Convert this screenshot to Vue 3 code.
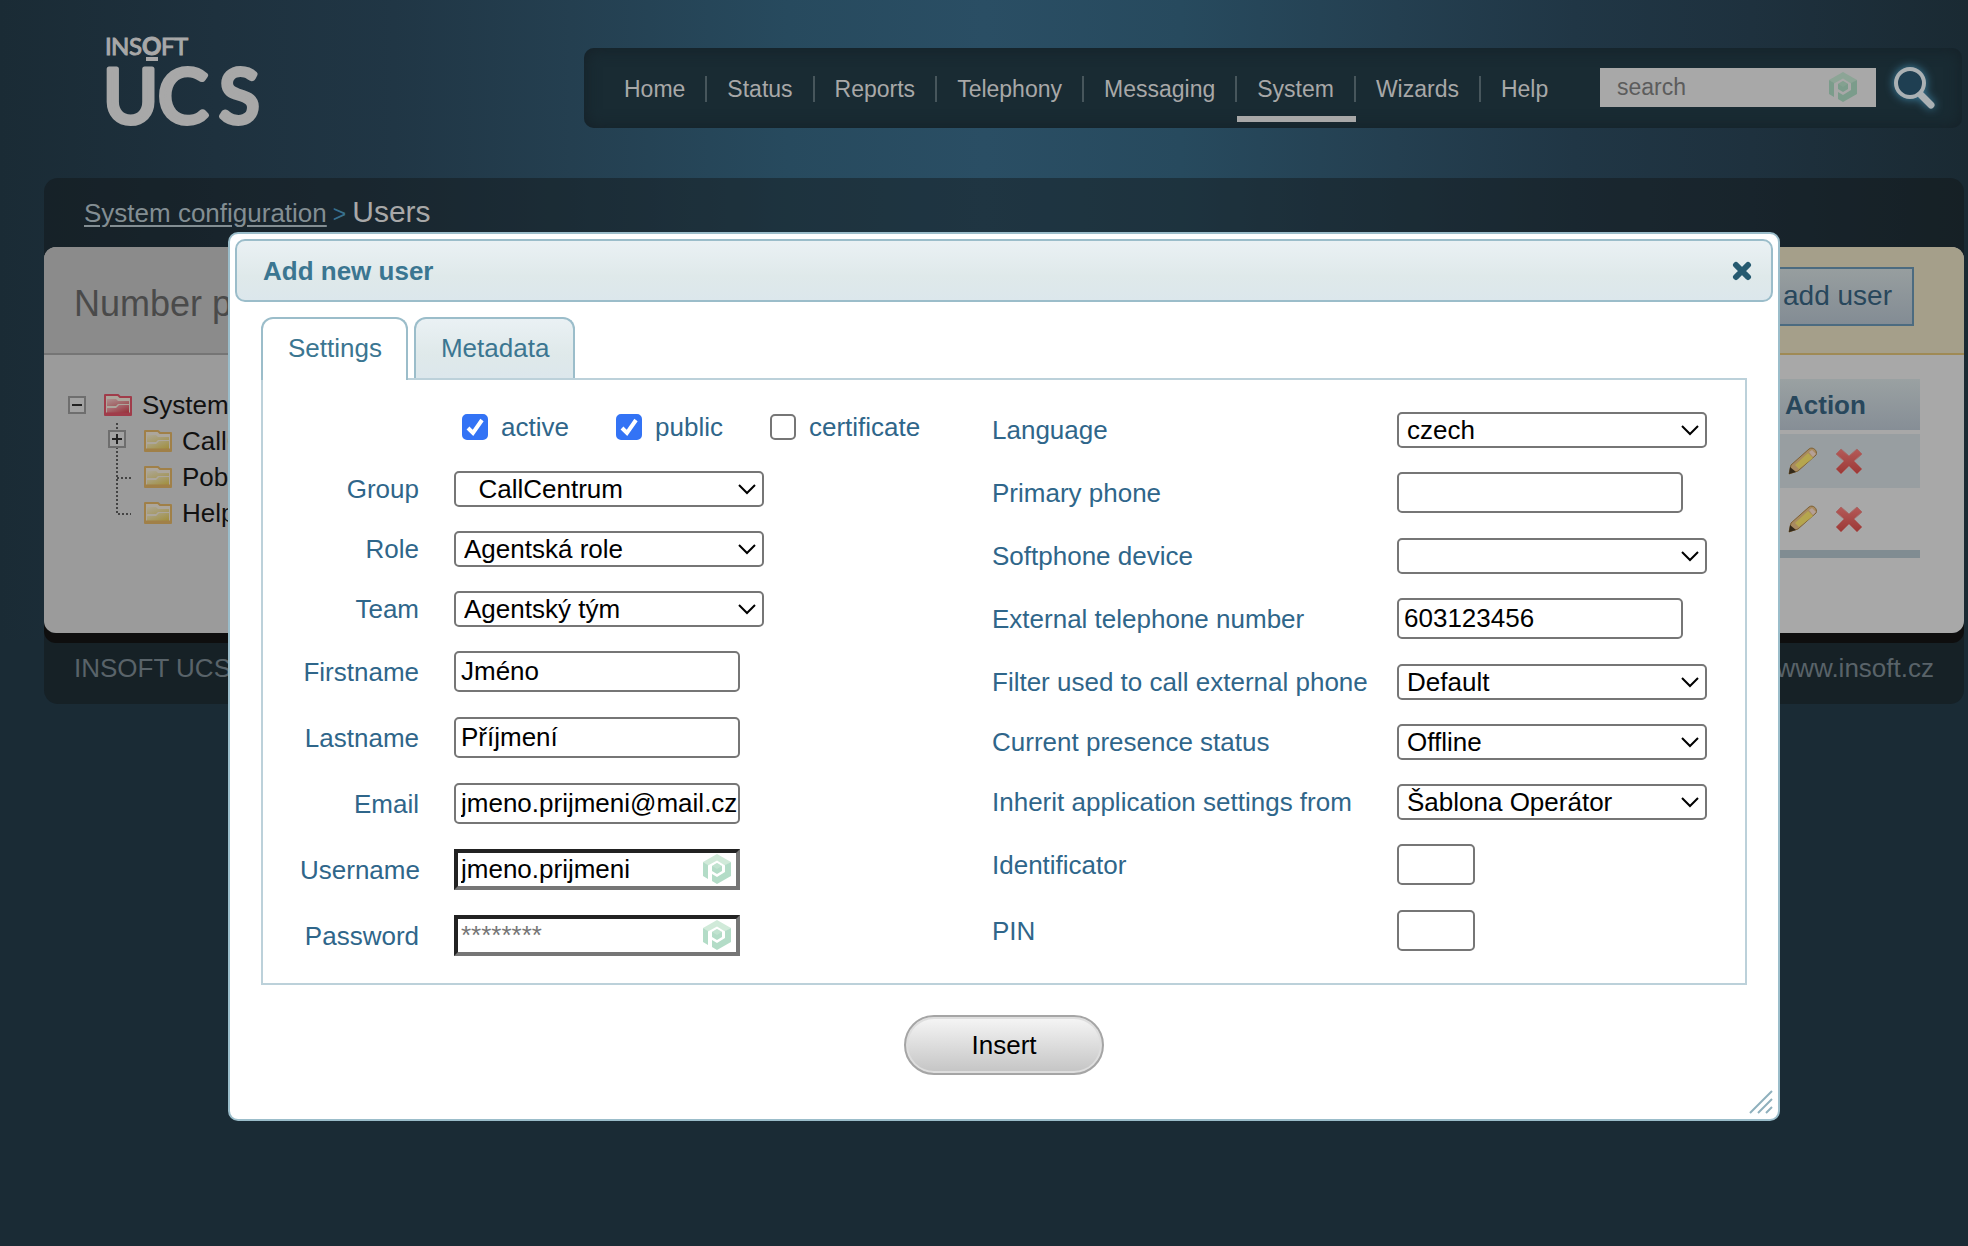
<script setup>
import { ref } from 'vue'

const nav = ['Home', 'Status', 'Reports', 'Telephony', 'Messaging', 'System', 'Wizards', 'Help']
const groups = ['CallCentrum', 'Pobočky', 'Helpdesk']

const flags = ref([
  { id: 'active', on: true },
  { id: 'public', on: true },
  { id: 'certificate', on: false },
])

const left = [
  { id: 'group', label: 'Group', kind: 'select', value: '\u00a0\u00a0CallCentrum' },
  { id: 'role', label: 'Role', kind: 'select', value: 'Agentská role' },
  { id: 'team', label: 'Team', kind: 'select', value: 'Agentský tým' },
  { id: 'firstname', label: 'Firstname', kind: 'text', value: 'Jméno' },
  { id: 'lastname', label: 'Lastname', kind: 'text', value: 'Příjmení' },
  { id: 'email', label: 'Email', kind: 'text', value: 'jmeno.prijmeni@mail.cz' },
  { id: 'username', label: 'Username', kind: 'text', value: 'jmeno.prijmeni', key: true },
  { id: 'password', label: 'Password', kind: 'password', value: '', hint: '********', key: true },
]

const right = [
  { id: 'language', label: 'Language', kind: 'select', value: 'czech' },
  { id: 'phone', label: 'Primary phone', kind: 'text', value: '' },
  { id: 'softphone', label: 'Softphone device', kind: 'select', value: '' },
  { id: 'external', label: 'External telephone number', kind: 'text', value: '603123456' },
  { id: 'filter', label: 'Filter used to call external phone', kind: 'select', value: 'Default' },
  { id: 'presence', label: 'Current presence status', kind: 'select', value: 'Offline' },
  { id: 'inherit', label: 'Inherit application settings from', kind: 'select', value: 'Šablona Operátor' },
  { id: 'ident', label: 'Identificator', kind: 'text', value: '', short: true },
  { id: 'pin', label: 'PIN', kind: 'text', value: '', short: true },
]

const columns = [
  { side: 'left', fields: left },
  { side: 'right', fields: right },
]
</script>

<template>
  <div class="page">
    <svg class="defs" width="0" height="0" aria-hidden="true">
      <defs>
        <linearGradient id="gold" x1="0" y1="0" x2="1" y2="1">
          <stop offset="0" stop-color="#aca792" />
          <stop offset="1" stop-color="#a08c34" />
        </linearGradient>
        <linearGradient id="rose" x1="0" y1="0" x2="1" y2="1">
          <stop offset="0" stop-color="#b0868a" />
          <stop offset="1" stop-color="#942630" />
        </linearGradient>
        <linearGradient id="cross" x1="0" y1="0" x2="0" y2="1">
          <stop offset="0" stop-color="#b45a58" />
          <stop offset="1" stop-color="#9c3836" />
        </linearGradient>
        <symbol id="key" viewBox="0 0 28 30">
          <path d="M0 8L14 0l14 8-6 3.500-8-5-9 5z" fill="var(--k1)" />
          <path d="M0 8l5 3v14l-5-3zM28 8v14L14 30l-5-3v-7l5 3 8-5v-7z" fill="var(--k2)" />
          <path d="M14 9l5 3v5l-5 3-5-3v-5z" fill="var(--k2)" />
          <path d="M14 9l5 3-5 3-5-3z" fill="var(--k1)" opacity=".5" />
        </symbol>
        <symbol id="folder" viewBox="0 0 28 22">
          <path d="M1 1h13l2 2h11v18H1z" fill="#aca69c" stroke="currentColor" stroke-width="2" stroke-linejoin="round" />
          <path d="M3 5h9l2 2h11v3H14l-2 2H3z" fill="var(--f)" opacity=".7" />
          <path d="M3 20v-6h9l3-3h10v9z" fill="var(--f)" />
          <path d="M2 20h24" stroke="currentColor" stroke-width="3" />
        </symbol>
      </defs>
    </svg>

    <header class="top">
      <svg class="logo" viewBox="0 0 170 116" role="img" aria-label="Insoft UCS">
        <text class="logo-small" x="5 11 29 42 61 74" y="29">INS<tspan font-weight="700">O</tspan>FT</text>
        <rect x="46" y="31" width="12" height="4" fill="#a8a8a8" />
        <text class="logo-big" x="3 58 119" y="97">UCS</text>
      </svg>
      <nav class="nav">
        <ul class="menu">
          <li v-for="item in nav" :key="item">
            <a href="#" :class="{ current: item === 'System' }">{{ item }}</a>
          </li>
        </ul>
        <form class="search" @submit.prevent>
          <div class="search-box">
            <input type="text" placeholder="search" aria-label="search" />
            <svg class="key dim"><use href="#key" /></svg>
          </div>
          <button type="submit" aria-label="Search">
            <svg width="46" height="46" viewBox="0 0 46 46">
              <circle cx="18" cy="19" r="14" fill="#1f3f52" stroke="#abb1b4" stroke-width="4" />
              <path d="M29 31l10 10" stroke="#abb1b4" stroke-width="7" stroke-linecap="round" />
            </svg>
          </button>
        </form>
      </nav>
    </header>

    <main class="panel">
      <div class="crumbs"><a href="#">System configuration</a><span class="gt">&gt;</span><h1>Users</h1></div>
      <div class="body">
        <section class="side">
          <h2>Number plan</h2>
          <div class="tree">
            <div class="node">
              <svg width="18" height="18" viewBox="0 0 18 18"><path d="M1 1h16v16H1z" fill="#a2a2a2" stroke="#6e6e6e" stroke-width="2" /><path d="M4 9h10" stroke="#222" stroke-width="2" /></svg>
              <svg class="folder root"><use href="#folder" /></svg>
              <span>System</span>
            </div>
            <div v-for="(g, i) in groups" :key="g" class="node child">
              <svg width="24" height="36" viewBox="0 0 24 36" fill="none">
                <path :d="i === 2 ? 'M9 0v19h14' : 'M9 0v36'" stroke="#444" stroke-width="2" stroke-dasharray="2 2" />
                <path v-if="i === 1" d="M9 19h14" stroke="#444" stroke-width="2" stroke-dasharray="2 2" />
                <path v-if="i === 0" d="M1 8h16v16H1z" fill="#a2a2a2" stroke="#6e6e6e" stroke-width="2" />
                <path v-if="i === 0" d="M4 16h10M9 11v10" stroke="#222" stroke-width="2" />
              </svg>
              <svg class="folder"><use href="#folder" /></svg>
              <span>{{ g }}</span>
            </div>
          </div>
        </section>
        <section class="content">
          <div class="tools"><button type="button">add user</button></div>
          <table class="users">
            <thead><tr><th class="action">Action</th></tr></thead>
            <tbody>
              <tr v-for="n in 2" :key="n">
                <td>
                  <div class="acts">
                    <svg width="30" height="28" viewBox="0 0 30 28" role="img" aria-label="Edit">
                      <path d="M1 27l2-9L21 2c4-3 9 2 7 6L10 24z" fill="#a88a60" stroke="#7d6034" />
                      <path d="M7 18L20 6l5 5-14 11z" fill="#b5a64e" />
                      <path d="M21 5l3-2 4 4-3 3z" fill="#b4a096" />
                      <path d="M1 27l1-7 6 5z" fill="#33291a" />
                    </svg>
                    <svg width="28" height="28" viewBox="0 0 28 28" role="img" aria-label="Delete">
                      <path d="M6 2l8 7 8-7 5 5-8 7 8 8-5 5-8-8-8 8-5-5 8-8-8-7z" fill="url(#cross)" stroke="#a66a68" stroke-linejoin="round" />
                    </svg>
                  </div>
                </td>
              </tr>
            </tbody>
            <tfoot><tr><td></td></tr></tfoot>
          </table>
        </section>
      </div>
      <footer class="foot"><span>INSOFT UCS</span><a href="#">www.insoft.cz</a></footer>
    </main>

    <div class="dialog" role="dialog" aria-labelledby="dialog-title">
      <div class="titlebar">
        <h2 id="dialog-title">Add new user</h2>
        <button type="button" aria-label="Close">
          <svg width="20" height="20" viewBox="0 0 20 20"><path d="M4 4l12 12M16 4L4 16" stroke="#265a70" stroke-width="6" stroke-linecap="round" /></svg>
        </button>
      </div>
      <div class="tabs" role="tablist">
        <button type="button" role="tab" aria-selected="true" class="tab on">Settings</button>
        <button type="button" role="tab" aria-selected="false" class="tab">Metadata</button>
      </div>
      <form id="user-form" class="sheet" @submit.prevent>
        <div v-for="col in columns" :key="col.side" class="col" :class="col.side">
          <div v-if="col.side === 'left'" class="flags">
            <label v-for="f in flags" :key="f.id"><input v-model="f.on" type="checkbox" />{{ f.id }}</label>
          </div>
          <div v-for="f in col.fields" :key="f.id" class="row" :class="f.kind">
            <label :for="f.id">{{ f.label }}</label>
            <select v-if="f.kind === 'select'" :id="f.id"><option>{{ f.value }}</option></select>
            <div v-else class="field" :class="{ short: f.short }">
              <input :id="f.id" :type="f.kind" :value="f.value" :placeholder="f.hint" :class="{ inset: f.key }" />
              <svg v-if="f.key" class="key"><use href="#key" /></svg>
            </div>
          </div>
        </div>
      </form>
      <button class="insert" type="submit" form="user-form">Insert</button>
      <svg class="grip" width="24" height="24" viewBox="0 0 24 24"><path d="M1 23L23 1M9 23L23 9M17 23l6-6" stroke="#8fb0bd" stroke-width="2" /></svg>
    </div>
  </div>
</template>

<style>
html,
body {
  background: #1a2b35;
}
</style>

<style scoped>
* {
  box-sizing: border-box;
}
.page {
  position: relative;
  min-height: 100vh;
  padding: 48px 4px 0 44px;
  overflow: hidden;
  font-family: "Liberation Sans", Arial, sans-serif;
  font-size: 26px;
  line-height: 30px;
  background: linear-gradient(90deg, #1a2b35, #1e313e 11%, #203645 20%, #243f50 29%, #274a5e 40%, #2a4e64 50%, #274a5e 60%, #243f50 71%, #203645 80%, #1e313e 89%, #1a2a33) no-repeat 0 0 / 100% 640px;
}
button,
input,
select {
  font: inherit;
}
button {
  cursor: pointer;
}
h1,
h2,
ul {
  margin: 0;
  padding: 0;
  font-weight: normal;
}
.defs {
  position: absolute;
}
.key {
  --k1: #d0ead9;
  --k2: #b3dcc7;
  position: absolute;
  top: 5px;
  right: 9px;
  width: 28px;
  height: 30px;
}
.key.dim {
  --k1: #8ca596;
  --k2: #7b9c8b;
  top: 4px;
  right: 19px;
}

.top {
  display: flex;
  align-items: flex-start;
  justify-content: space-between;
  height: 130px;
  padding-right: 2px;
}
.logo {
  flex: none;
  width: 170px;
  height: 116px;
  margin: -22px 0 0 56px;
  font-family: Lato, "Liberation Sans", sans-serif;
}
.logo-small {
  font-size: 24px;
  fill: #a8a8a8;
  stroke: #a8a8a8;
}
.logo-big {
  font-size: 75px;
  fill: #a8a8a8;
  stroke: #a8a8a8;
  stroke-width: 5px;
  stroke-linejoin: round;
}
.nav {
  display: flex;
  flex: 0 1 1378px;
  align-items: center;
  justify-content: space-between;
  height: 80px;
  padding: 0 24px 2px 20px;
  border-radius: 10px;
  background: #192b33;
  box-shadow: inset 0 0 16px #152027;
  font-size: 23px;
  line-height: 26px;
}
.menu {
  display: flex;
  padding-top: 4px;
  list-style: none;
}
.menu li + li {
  border-left: 2px solid #47565c;
}
.menu a {
  position: relative;
  display: block;
  padding: 0 20px;
  color: #a8a8a8;
  text-decoration: none;
}
.menu a.current::after {
  content: "";
  position: absolute;
  top: 40px;
  left: 0;
  right: -2px;
  height: 6px;
  background: #a8a8a8;
}
.search {
  display: flex;
  align-items: center;
  gap: 16px;
}
.search-box {
  position: relative;
  width: 276px;
}
.search input {
  display: block;
  width: 100%;
  height: 39px;
  padding: 0 60px 0 17px;
  border: 0;
  background: #a8a8a8;
}
.search input::placeholder {
  color: #5c5c5c;
}
.search button {
  display: flex;
  padding: 0;
  border: 0;
  background: none;
  filter: drop-shadow(0 0 5px #3f86a8);
}

.panel {
  border-radius: 14px;
  background: rgba(16, 20, 20, 0.42);
}
.crumbs {
  display: flex;
  align-items: baseline;
  gap: 6px;
  height: 69px;
  padding: 19px 40px 0;
}
.crumbs a {
  color: #838e93;
  text-underline-offset: 3px;
}
.gt {
  color: #38708f;
  font-size: 23px;
}
.crumbs h1 {
  color: #a8a8a8;
  font-size: 30px;
}
.body {
  display: flex;
  height: 386px;
  overflow: hidden;
  border-radius: 12px;
}
.panel .body {
  box-shadow: 0 10px 0 #0e0e0e;
}
.side {
  width: 420px;
  background: #9b9b9b;
}
.side h2 {
  height: 108px;
  padding: 37px 30px 0;
  border-bottom: 2px solid #757575;
  background: #8b8b8b;
  color: #4a4a4a;
  font-size: 36px;
  line-height: 40px;
}
.tree {
  padding: 32px 24px;
  color: #111;
}
.node {
  display: flex;
  align-items: center;
  height: 36px;
}
.node .folder {
  --f: url(#gold);
  width: 28px;
  height: 22px;
  margin: 0 10px 0 18px;
  color: #a08048;
}
.node .folder.root {
  --f: url(#rose);
  color: #a03c4a;
}
.child {
  padding-left: 40px;
}
.child .folder {
  margin-left: 12px;
}
.content {
  flex: 1;
  background: #a8a8a8;
}
.tools {
  display: flex;
  justify-content: flex-end;
  height: 108px;
  padding: 20px 50px;
  border-bottom: 2px solid #9f8a55;
  background: #a59f8a;
}
.tools button {
  height: 59px;
  padding: 0 20px 2px;
  border: 2px solid #4c6b80;
  background: linear-gradient(#979e9f, #838c94);
  color: #28475c;
  font-size: 28px;
}
.users {
  width: calc(100% - 64px);
  margin: 20px 44px 0 20px;
  border-spacing: 0 4px;
}
.users th,
.users td {
  padding: 0;
}
.users th {
  height: 51px;
  background: linear-gradient(#9aa1a2, #868e96);
  color: #28475c;
  font-weight: bold;
}
.users .action {
  padding-left: calc(100% - 135px);
  text-align: left;
}
.users tbody td {
  height: 54px;
}
.users tbody tr:first-child td {
  background: #989ea1;
}
.users tfoot td {
  height: 8px;
  background: #808c92;
}
.acts {
  display: flex;
  justify-content: flex-end;
  gap: 17px;
  padding-right: 57px;
}
.foot {
  display: flex;
  justify-content: space-between;
  height: 71px;
  padding: 20px 30px 0;
  color: #596369;
}
.foot a {
  color: inherit;
  text-decoration: none;
}

.dialog {
  position: absolute;
  top: 232px;
  left: 228px;
  right: 188px;
  padding: 5px 5px 44px;
  border: 2px solid #9bbdca;
  border-radius: 10px;
  background: #fff;
}
.titlebar {
  display: flex;
  align-items: center;
  justify-content: space-between;
  height: 63px;
  padding: 0 19px 0 26px;
  border: 2px solid #9bbdca;
  border-radius: 10px;
  background: linear-gradient(#eaf1f4, #dfe9ea 60%, #dce7ec);
}
.titlebar h2 {
  color: #3b7691;
  font-size: 26px;
  font-weight: bold;
}
.titlebar button {
  display: flex;
  padding: 0;
  border: 0;
  background: none;
}
.tabs {
  display: flex;
  gap: 6px;
  margin: 15px 26px 0;
}
.tab {
  height: 61px;
  padding: 0 24px 2px 25px;
  border: 2px solid #9bbdca;
  border-bottom: 0;
  border-radius: 12px 12px 0 0;
  background: linear-gradient(#eaf1f4, #dfe9ea 60%, #dce7ec);
  color: #3b7691;
}
.tab.on {
  position: relative;
  height: 63px;
  margin-bottom: -2px;
  padding-bottom: 4px;
  background: #fff;
}
.sheet {
  display: flex;
  justify-content: space-between;
  margin: 0 26px;
  padding: 20px 38px 14px 37px;
  border: 2px solid #bcd1da;
  color: #2f668a;
}
.flags {
  display: flex;
  height: 54px;
  margin: 0 0 5px 162px;
  align-items: center;
}
.flags label {
  display: flex;
  align-items: center;
  width: 154px;
}
.flags input {
  flex: none;
  width: 26px;
  height: 26px;
  margin: 0 13px 0 0;
  appearance: none;
  border: 2px solid #767676;
  border-radius: 5px;
  background: #fff;
}
.flags input:checked {
  border-color: #3373f5;
  background: #3373f5 url("data:image/svg+xml,%3Csvg xmlns='http://www.w3.org/2000/svg' viewBox='0 0 22 22'%3E%3Cpath d='M4 12l5 5 9-13' fill='none' stroke='white' stroke-width='4'/%3E%3C/svg%3E");
}
.row {
  display: flex;
  align-items: center;
  height: 65px;
}
.row.select {
  height: 60px;
}
.row label {
  white-space: nowrap;
}
.left .row label {
  width: 119px;
  margin-right: 35px;
  text-align: right;
}
.right .row label {
  width: 405px;
}
.row select {
  width: 310px;
  height: 36px;
  padding: 0 30px 0 8px;
  appearance: none;
  border: 2px solid #767676;
  border-radius: 5px;
  background: #fff url("data:image/svg+xml,%3Csvg xmlns='http://www.w3.org/2000/svg' width='18' height='11'%3E%3Cpath d='M1 1l8 8 8-8' fill='none' stroke='black' stroke-width='2'/%3E%3C/svg%3E") no-repeat right 6px center;
  color: #000;
  line-height: 30px;
}
.row:not(.select) {
  height: 66px;
  padding-bottom: 1px;
}
.field {
  position: relative;
  width: 286px;
}
.field.short {
  width: 78px;
}
.field input {
  display: block;
  width: 100%;
  height: 41px;
  padding: 0 0 0 5px;
  border: 2px solid #767676;
  border-radius: 5px;
  background: #fff;
  color: #000;
}
.field input.inset {
  padding: 0 40px 0 3px;
  border: 4px solid;
  border-color: #222 #767676 #767676 #222;
  border-radius: 0;
}
.field input::placeholder {
  color: #757575;
}
.insert {
  display: block;
  width: 200px;
  height: 60px;
  margin: 30px auto 0;
  padding: 0;
  border: 2px solid #a5a5a5;
  border-radius: 30px;
  background: linear-gradient(#f6f6f6, #c4c4c4);
  box-shadow: inset 0 0 0 2px #dedede;
  color: #000;
}
.grip {
  position: absolute;
  right: 5px;
  bottom: 5px;
}
</style>
